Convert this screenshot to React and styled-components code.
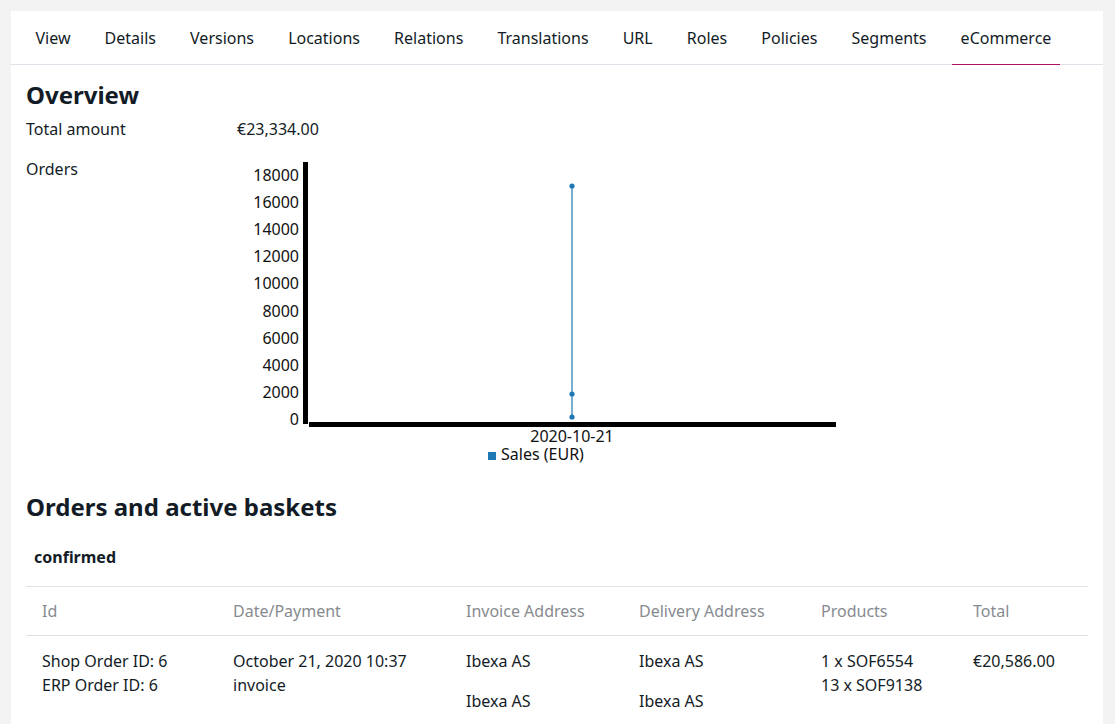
import React from 'react';
import styled, { createGlobalStyle } from 'styled-components';

const GlobalStyle = createGlobalStyle`
  html, body {
    margin: 0;
    padding: 0;
    background: #f3f3f4;
    font-family: 'Noto Sans', 'Open Sans', sans-serif;
    color: #131c26;
  }
`;

const Page = styled.div`
  padding: 11px 12px 0 11px;
  height: 724px;
  box-sizing: border-box;
  overflow: hidden;
`;

const Panel = styled.section`
  background: #fff;
  min-height: 800px;
`;

const Tabs = styled.nav`
  display: flex;
  gap: 16.1px;
  padding: 0 15px 0 15.5px;
  height: 53px;
  border-bottom: 1px solid #e0e0e8;
`;

const Tab = styled.div`
  display: flex;
  align-items: center;
  padding: 0 9px;
  font-size: 16px;
  color: #131c26;
  border-bottom: 1px solid ${p => (p.active ? '#ae1164' : 'transparent')};
  margin-bottom: -1px;
`;

const Body = styled.div`
  padding: 0 15px;
`;

const Heading = styled.h2`
  margin: ${p => p.top}px 0 0;
  font-size: 24px;
  line-height: 32px;
  font-weight: 700;
`;

const InfoRow = styled.div`
  display: grid;
  grid-template-columns: 211px 1fr;
  font-size: 16px;
  line-height: 24px;
  margin-top: ${p => p.top}px;
`;

const Status = styled.div`
  margin: 22px 0 0 8px;
  font-size: 16px;
  line-height: 24px;
  font-weight: 700;
`;

const Table = styled.table`
  width: 100%;
  margin-top: 17px;
  border-collapse: collapse;
  table-layout: fixed;
  font-size: 16px;
  line-height: 24px;
`;

const Th = styled.th`
  text-align: left;
  font-weight: 400;
  color: #878b90;
  padding: 12px 16px;
  border-top: 1px solid #e0e0e8;
  border-bottom: 1px solid #e0e0e8;
`;

const Td = styled.td`
  vertical-align: top;
  padding: 13px 16px;
`;

const Block = styled.div`
  & + & {
    margin-top: 16px;
  }
`;

const ticks = [18000, 16000, 14000, 12000, 10000, 8000, 6000, 4000, 2000, 0];

const Chart = () => (
  <svg width="620" height="310" style={{ display: 'block' }}>
    <g fontFamily="'Noto Sans', sans-serif" fontSize="16" fill="#111">
      {ticks.map((t, i) => (
        <text key={t} x="62" y={24 + i * 27.1} textAnchor="end">{t}</text>
      ))}
      <text x="335" y="285" textAnchor="middle">2020-10-21</text>
      <text x="264" y="303">Sales (EUR)</text>
    </g>
    <rect x="66" y="5" width="5" height="262" fill="#000" />
    <rect x="72" y="265" width="527" height="5" fill="#000" />
    <line x1="335" y1="29" x2="335" y2="260" stroke="#1f77b4" strokeWidth="1.2" />
    {[29, 237, 260].map(y => (
      <circle key={y} cx="335" cy={y} r="2.6" fill="#1f77b4" />
    ))}
    <rect x="251" y="295" width="8" height="8" fill="#1f77b4" />
  </svg>
);

const tabs = ['View', 'Details', 'Versions', 'Locations', 'Relations', 'Translations', 'URL', 'Roles', 'Policies', 'Segments', 'eCommerce'];

const App = () => (
  <>
    <GlobalStyle />
    <Page>
      <Panel>
        <Tabs>
          {tabs.map(t => (
            <Tab key={t} active={t === 'eCommerce'}>{t}</Tab>
          ))}
        </Tabs>
        <Body>
          <Heading top={14}>Overview</Heading>
          <InfoRow top={6}>
            <span>Total amount</span>
            <span>€23,334.00</span>
          </InfoRow>
          <InfoRow top={16}>
            <span>Orders</span>
            <Chart />
          </InfoRow>
          <Heading top={24}>Orders and active baskets</Heading>
          <Status>confirmed</Status>
          <Table>
            <colgroup>
              <col style={{ width: 191 }} />
              <col style={{ width: 233 }} />
              <col style={{ width: 173 }} />
              <col style={{ width: 182 }} />
              <col style={{ width: 152 }} />
              <col />
            </colgroup>
            <thead>
              <tr>
                <Th>Id</Th>
                <Th>Date/Payment</Th>
                <Th>Invoice Address</Th>
                <Th>Delivery Address</Th>
                <Th>Products</Th>
                <Th>Total</Th>
              </tr>
            </thead>
            <tbody>
              <tr>
                <Td>Shop Order ID: 6<br />ERP Order ID: 6</Td>
                <Td>October 21, 2020 10:37<br />invoice</Td>
                <Td><Block>Ibexa AS</Block><Block>Ibexa AS</Block></Td>
                <Td><Block>Ibexa AS</Block><Block>Ibexa AS</Block></Td>
                <Td>1 x SOF6554<br />13 x SOF9138</Td>
                <Td>€20,586.00</Td>
              </tr>
            </tbody>
          </Table>
        </Body>
      </Panel>
    </Page>
  </>
);

export default App;
